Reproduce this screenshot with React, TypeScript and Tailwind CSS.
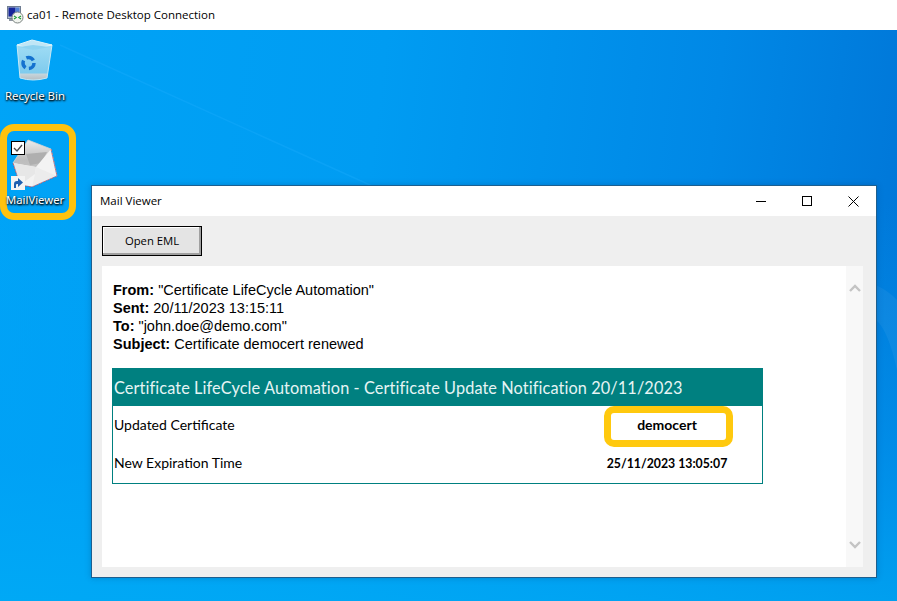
const RdpIcon = () => (
	<svg width="18" height="18" viewBox="0 0 18 18" className="shrink-0">
		<rect x="1.5" y="0.5" width="13" height="12" fill="#b9c2cf" stroke="#6f7d92" strokeWidth="1" />
		<rect x="2.5" y="1.5" width="7" height="9" fill="#16259a" />
		<rect x="9.5" y="1.5" width="4" height="9" fill="#4f7fd8" />
		<path d="M3 13h8v2H3z" fill="#8f97a3" />
		<circle cx="11.5" cy="11.5" r="5.5" fill="#f2f4ef" stroke="#7c8582" strokeWidth="1" />
		<path d="M8 10l2.200 1.500L8 13M15 10l-2.200 1.500L15 13" fill="none" stroke="#1e9e35" strokeWidth="1.200" />
	</svg>
)

const RecycleBin = () => (
	<svg width="40" height="44" viewBox="0 0 40 44">
		<defs>
			<linearGradient id="bin" x1="0" y1="0" x2="0" y2="1">
				<stop offset="0" stopColor="#9fdcf5" />
				<stop offset="0.8" stopColor="#7fcbed" />
				<stop offset="0.83" stopColor="#c6d5dc" />
				<stop offset="1" stopColor="#b6bdc1" />
			</linearGradient>
		</defs>
		<path d="M2 6 L5 39 Q18 43 32 39 L37 6 Z" fill="url(#bin)" stroke="#c6e8f5" strokeWidth="1" />
		<path d="M2 6 L17 1 L37 6 L18 10 Z" fill="#bfe6f6" stroke="#dcf3fb" strokeWidth="1" />
		<path d="M4 8 L18 11 L35 8 L18 6 Z" fill="#8fd3f0" />
		<circle cx="13.500" cy="24" r="5.500" fill="none" stroke="#1472cf" strokeWidth="3.500" strokeDasharray="8 3.500" />
	</svg>
)

const MailIcon = () => (
	<svg width="50" height="50" viewBox="0 0 50 50">
		<defs>
			<linearGradient id="flap" x1="0" y1="0" x2="0" y2="1">
				<stop offset="0" stopColor="#ececec" />
				<stop offset="0.55" stopColor="#bdbdbd" />
				<stop offset="1" stopColor="#c8c8c8" />
			</linearGradient>
		</defs>
		<path d="M2 25 L17 2 L40 11 L46 38 Z" fill="url(#flap)" stroke="#d4d4d4" strokeWidth="0.800" />
		<path d="M15 16 L36 14 L30 25 L19 27 Z" fill="#afafaf" />
		<path d="M2 25 L25 29 L40 11 L46 38 L21 49 L9 47 Z" fill="#f3f3f3" />
		<path d="M2 25 L25 29 L24 36 L9 47 Z" fill="#e7e7e7" />
		<path d="M25 29 L46 38 L21 49 L24 36 Z" fill="#ececec" />
		<path d="M40 11 L46 38 L21 49 L9 47 L2 25" fill="none" stroke="#cf3b3b" strokeOpacity="0.7" strokeWidth="1" strokeDasharray="2 2" />
		<path d="M40 11 L46 38 L21 49 L9 47 L2 25" fill="none" stroke="#3a5cb8" strokeOpacity="0.7" strokeWidth="1" strokeDasharray="2 2" strokeDashoffset="2" />
	</svg>
)

const ShortcutArrow = () => (
	<svg width="14" height="14" viewBox="0 0 14 14">
		<rect width="14" height="14" fill="#f4f4f4" />
		<path d="M3 12V8q0-3 3-3h1V2l5 4.500L7 11V8H6q-1 0-1 1v3z" fill="#1f5fb0" />
	</svg>
)

const Chevron = ({ up }: { up?: boolean }) => (
	<svg width="12" height="8" viewBox="0 0 12 8">
		<path d={up ? 'M1 7l5-5 5 5' : 'M1 1l5 5 5-5'} fill="none" stroke="#c4c4c4" strokeWidth="2.400" />
	</svg>
)

const HeaderLine = ({ label, value }: { label: string; value: string }) => (
	<p className="h-[18px] leading-[18px]">
		<b>{label}</b> {value}
	</p>
)

const App = () => {
	return (
		<div className="flex flex-col w-[897px] h-[601px] overflow-hidden font-['Noto_Sans',sans-serif]">
			<div className="flex items-center gap-[3px] h-[30px] pl-[6px] pb-[1px] bg-white text-[11.5px] text-black shrink-0">
				<RdpIcon />
				<span className="font-['Open_Sans',sans-serif]">ca01 - Remote Desktop Connection</span>
			</div>

			<div className="relative flex-1 bg-[linear-gradient(97deg,#00a4f7_0%,#009cf2_40%,#0088e6_75%,#0074d6_100%)]">
				<div className="absolute inset-0 bg-[linear-gradient(to_bottom,transparent_30%,rgba(0,160,245,0.55)_75%,rgba(0,170,245,0.8)_100%)]" />
				<svg className="absolute inset-0" width="897" height="571" viewBox="0 0 897 571">
					<path d="M60 15 L370 155 L640 270" fill="none" stroke="#22b0ff" strokeOpacity="0.3" strokeWidth="1.500" />
					<path d="M876 255 Q890 262 897 270 V340 Q888 300 876 290 Z" fill="#ffffff" fillOpacity="0.05" />
				</svg>

				<div className="absolute left-[15px] top-[9px]">
					<RecycleBin />
				</div>
				<span className="absolute left-[5px] top-[58px] text-[11.4px] leading-[16px] text-white [text-shadow:0_1px_2px_#000,1px_1px_2px_#000]">
					Recycle Bin
				</span>

				<div className="absolute left-[0px] top-[94px] w-[76px] h-[96px] rounded-[14px] border-[7px] border-[#ffc20e]" />
				<div className="absolute left-[11px] top-[108px]">
					<MailIcon />
				</div>
				<div className="absolute left-[11px] top-[111px] w-[14px] h-[14px] bg-white border border-black flex items-center justify-center">
					<svg width="10" height="10" viewBox="0 0 10 10">
						<path d="M1 5l3 3 5-6" fill="none" stroke="#444" strokeWidth="1.300" />
					</svg>
				</div>
				<div className="absolute left-[11px] top-[146px]">
					<ShortcutArrow />
				</div>
				<span className="absolute left-[6px] top-[162px] text-[11.3px] leading-[16px] text-white [text-shadow:0_1px_2px_#000,1px_1px_2px_#000]">
					MailViewer
				</span>

				<div className="absolute left-[91px] top-[155px] w-[786px] h-[393px] flex flex-col border border-[#1d5f8f] bg-[#efefef] shadow-[0_0_6px_rgba(0,40,90,0.25)]">
					<div className="flex items-center justify-between h-[30px] bg-white shrink-0">
						<span className="pl-[8px] text-[11.5px] text-black font-['Open_Sans',sans-serif]">Mail Viewer</span>
						<div className="flex items-center">
							<div className="flex items-center justify-center w-[46px] h-[30px]">
								<div className="w-[10px] h-[1px] bg-black" />
							</div>
							<div className="flex items-center justify-center w-[46px] h-[30px]">
								<div className="w-[10px] h-[10px] border border-black" />
							</div>
							<div className="flex items-center justify-center w-[46px] h-[30px]">
								<svg width="11" height="11" viewBox="0 0 11 11">
									<path d="M.5.5l10 10M10.500.5l-10 10" stroke="#000" strokeWidth="1" />
								</svg>
							</div>
						</div>
					</div>

					<div className="flex flex-col flex-1 pt-[10px] pl-[10px] pr-[13px] pb-[10px] min-h-0">
						<button className="flex items-center justify-center w-[100px] h-[30px] shrink-0 bg-[#e4e4e4] border border-black shadow-[inset_-2px_-2px_0_#a0a0a0,inset_1px_1px_0_#fff] text-[11.3px] text-black font-['Open_Sans',sans-serif]">
							Open EML
						</button>

						<div className="flex flex-1 mt-[10px] bg-white min-h-0">
							<div className="relative flex-1 pt-[15px] pl-[10px] text-black font-['Liberation_Sans',sans-serif]">
								<div className="pl-[1px] text-[14.5px]">
									<HeaderLine label="From:" value={'"Certificate LifeCycle Automation"'} />
									<HeaderLine label="Sent:" value="20/11/2023 13:15:11" />
									<HeaderLine label="To:" value={'"john.doe@demo.com"'} />
									<HeaderLine label="Subject:" value="Certificate democert renewed" />
								</div>

								<div className="relative mt-[15px] w-[651px] h-[116px] border border-[#008080] font-['Lato',sans-serif] text-[14px] text-black">
									<div className="flex items-center h-[37px] pl-[1px] pt-[1px] bg-[#008080] text-[16.3px] text-[#e6f4f4] tracking-[0.1px]">
										Certificate LifeCycle Automation - Certificate Update Notification 20/11/2023
									</div>
									<div className="flex items-center h-[38px] pl-[1px] pb-[2px]">
										<span className="flex-1">Updated Certificate</span>
										<b className="w-[190px] text-center">democert</b>
									</div>
									<div className="flex items-center h-[38px] pl-[1px] pb-[2px]">
										<span className="flex-1">New Expiration Time</span>
										<b className="w-[190px] pt-[4px] text-center text-[12.3px]">25/11/2023 13:05:07</b>
									</div>
									<div className="absolute left-[491px] top-[37px] w-[129px] h-[41px] rounded-[10px] border-[7px] border-[#ffc90e]" />
								</div>
							</div>

							<div className="flex flex-col items-center justify-between w-[17px] pt-[18px] pb-[18px] bg-[#f8f8f8] shrink-0">
								<Chevron up />
								<Chevron />
							</div>
						</div>
					</div>
				</div>
			</div>
		</div>
	)
}

export default App
